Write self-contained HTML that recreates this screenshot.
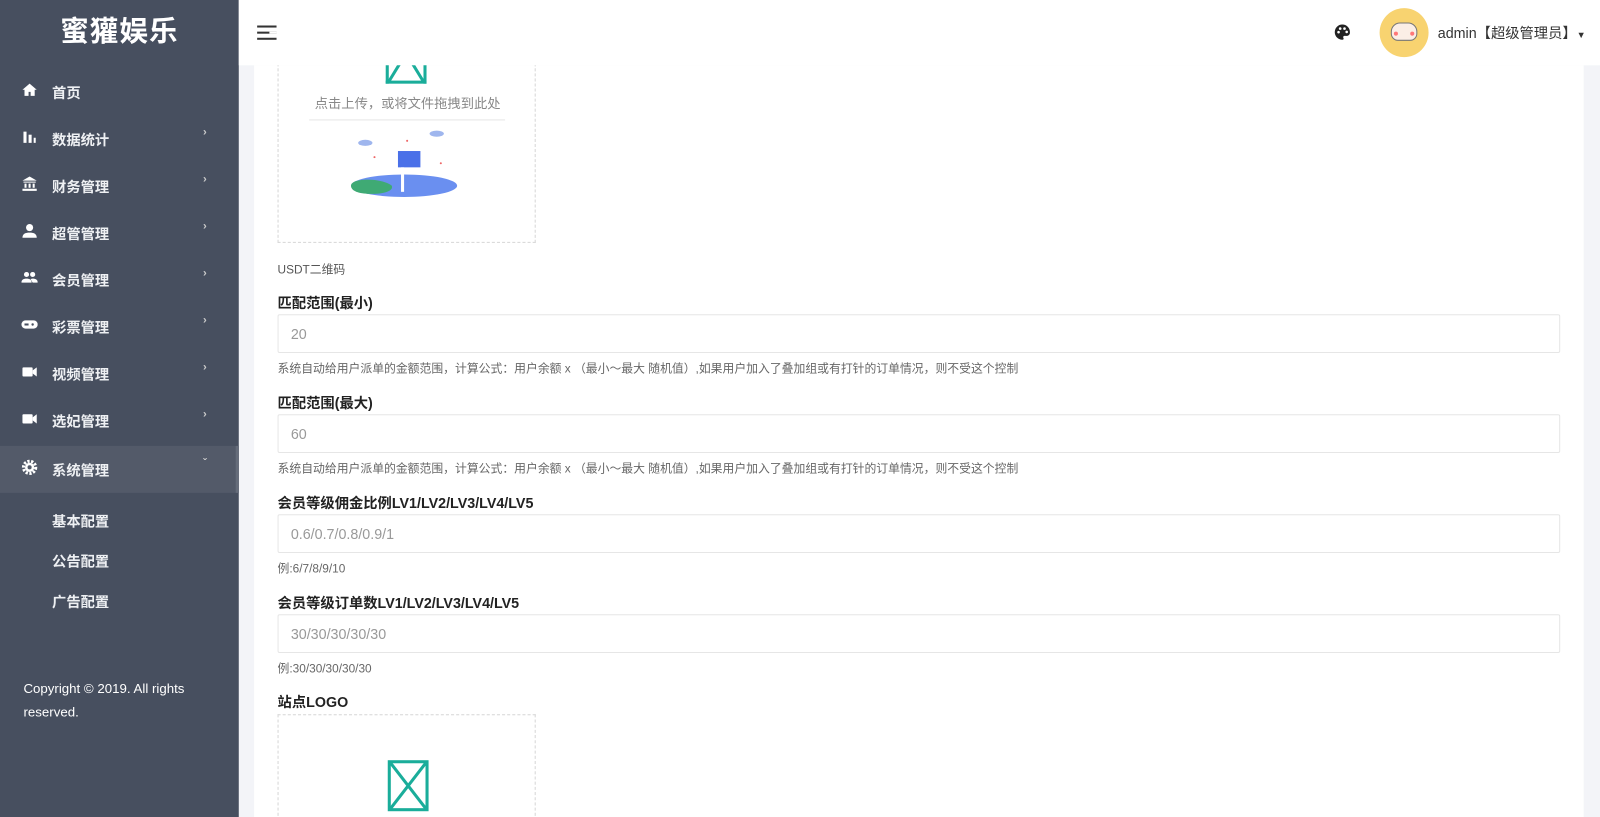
<!DOCTYPE html>
<html><head><meta charset="utf-8"><style>
*{margin:0;padding:0;box-sizing:border-box}
body{width:1600px;height:817px;overflow:hidden;background:#f3f4f8;font-family:"Liberation Sans","Noto Sans CJK SC",sans-serif}
#w{position:absolute;left:0;top:0;width:1568px;height:801px;transform:scale(1.020408);transform-origin:0 0}
.side{position:absolute;left:0;top:0;width:234px;height:801px;background:#474f5f;color:#fff}
.logo{height:64px;text-align:center;font-size:28px;font-weight:bold;line-height:62px;letter-spacing:1px}
.item{position:absolute;left:0;width:234px;height:46px;font-size:14px;font-weight:bold;color:#eef0f3}
.item .ic{position:absolute;left:21px;top:13px;width:16px;height:16px}
.item .t{position:absolute;left:51px;top:14px}
.item .ar{position:absolute;left:199px;top:11px;font-size:11px;color:#ccc}
.active{background:#535a69;border-right:3px solid #656c7a}
.sub{position:absolute;left:51px;font-size:14px;font-weight:bold;color:#eef0f3}
.copy{position:absolute;left:23px;top:663px;font-size:13px;line-height:23px;color:#fff}
.top{position:absolute;left:234px;top:0;width:1334px;height:64px;background:#fff}
.card{position:absolute;left:249px;top:64px;width:1303px;height:737px;background:#fff;overflow:hidden}
.lbl{position:absolute;left:23px;font-size:14px;font-weight:bold;color:#222}
.inp{position:absolute;left:23px;width:1257px;height:38px;border:1px solid #e6e6e6;border-radius:2px;font-size:14px;color:#999;padding:10px 12px;line-height:17px}
.hint{position:absolute;left:23px;font-size:11.6px;color:#666}
.up{position:absolute;left:23px;width:253px;border:1px dashed #d6d6d6}
</style></head><body><div id="w">
<div class="side">
<div class="logo">蜜獾娱乐</div>
<div class="item" style="top:67px"><svg class="ic" viewBox="0 0 16 16"><path d="M8 2L1 8h2v6h4v-4h2v4h4V8h2z" fill="#fff"/></svg><span class="t">首页</span></div>
<div class="item" style="top:113px"><svg class="ic" viewBox="0 0 16 16"><rect x="2" y="3" width="3" height="11" fill="#fff"/><rect x="7" y="6" width="3" height="8" fill="#fff"/><rect x="12" y="9" width="2" height="5" fill="#fff"/></svg><span class="t">数据统计</span><span class="ar">›</span></div>
<div class="item" style="top:159px"><svg class="ic" viewBox="0 0 16 16"><path d="M8 1L1 5h14zM2 6h12v1H2zM3 8h2v4H3zM7 8h2v4H7zM11 8h2v4h-2zM1 13h14v2H1z" fill="#fff"/></svg><span class="t">财务管理</span><span class="ar">›</span></div>
<div class="item" style="top:205px"><svg class="ic" viewBox="0 0 16 16"><circle cx="8" cy="5" r="3.5" fill="#fff"/><path d="M1 15c0-4 3-5 7-5s7 1 7 5z" fill="#fff"/></svg><span class="t">超管管理</span><span class="ar">›</span></div>
<div class="item" style="top:251px"><svg class="ic" viewBox="0 0 16 16"><circle cx="5" cy="5" r="2.5" fill="#fff"/><circle cx="11" cy="5" r="2.5" fill="#fff"/><path d="M0 13c0-3 2-4 5-4s5 1 5 4zM9 9.5c1-.4 1.5-.5 2-.5 3 0 5 1 5 4h-5z" fill="#fff"/></svg><span class="t">会员管理</span><span class="ar">›</span></div>
<div class="item" style="top:297px"><svg class="ic" viewBox="0 0 16 16"><rect x="0" y="4" width="16" height="8" rx="4" fill="#fff"/><circle cx="11" cy="8" r="1.2" fill="#474f5f"/><rect x="3" y="7" width="4" height="2" fill="#474f5f"/></svg><span class="t">彩票管理</span><span class="ar">›</span></div>
<div class="item" style="top:343px"><svg class="ic" viewBox="0 0 16 16"><rect x="1" y="4" width="10" height="9" rx="1" fill="#fff"/><path d="M11 7l4-3v9l-4-3z" fill="#fff"/></svg><span class="t">视频管理</span><span class="ar">›</span></div>
<div class="item" style="top:389px"><svg class="ic" viewBox="0 0 16 16"><rect x="1" y="4" width="10" height="9" rx="1" fill="#fff"/><path d="M11 7l4-3v9l-4-3z" fill="#fff"/></svg><span class="t">选妃管理</span><span class="ar">›</span></div>
<div class="item active" style="top:437px"><svg class="ic" viewBox="0 0 16 16"><circle cx="8" cy="8" r="6" fill="none" stroke="#fff" stroke-width="3" stroke-dasharray="2.2 1.5"/><circle cx="8" cy="8" r="4.5" fill="#fff"/><circle cx="8" cy="8" r="2" fill="#535a69"/></svg><span class="t">系统管理</span><span class="ar">ˇ</span></div>
<div class="sub" style="top:501px">基本配置</div>
<div class="sub" style="top:540px">公告配置</div>
<div class="sub" style="top:580px">广告配置</div>
<div class="copy">Copyright © 2019. All rights<br>reserved.</div>
</div>
<div class="top">
<div style="position:absolute;left:18px;top:25px;width:19px;height:2px;background:#333;box-shadow:0 6px 0 #333,0 12px 0 #333"></div>
<div style="position:absolute;left:30px;top:31px;width:7px;height:2px;background:#fff"></div>
<svg style="position:absolute;left:1073px;top:23px" width="17" height="17" viewBox="0 0 16 16"><path d="M8 1a7 7 0 0 0 0 14c1 0 1.5-.7 1-1.6-.5-.9 0-1.9 1-1.9h2A3 3 0 0 0 15 8 7 7 0 0 0 8 1z" fill="#222"/><circle cx="4.5" cy="8" r="1.2" fill="#fff"/><circle cx="6" cy="4.7" r="1.2" fill="#fff"/><circle cx="10" cy="4.7" r="1.2" fill="#fff"/><circle cx="12" cy="7.8" r="1.2" fill="#fff"/></svg>
<div style="position:absolute;left:1118px;top:8px;width:48px;height:48px;border-radius:50%;background:#f8d370"></div>
<div style="position:absolute;left:1129px;top:22px;width:26px;height:18px;border-radius:9px 9px 7px 7px;background:#fbeee6;border:1px solid #777"></div>
<div style="position:absolute;left:1132px;top:31px;width:4px;height:4px;border-radius:50%;background:#f77"></div>
<div style="position:absolute;left:1148px;top:31px;width:4px;height:4px;border-radius:50%;background:#f77"></div>
<div style="position:absolute;left:1175px;top:22px;font-size:14px;color:#333">admin【超级管理员】<span style="font-size:9px">▼</span></div>
</div>
<div class="card">
<div class="up" style="top:-2px;height:176px;border-top:none">
<div style="position:absolute;left:105px;top:0;width:40px;height:20px;border:3px solid #1aad9a;border-top:none"></div>
<svg style="position:absolute;left:105px;top:0" width="40" height="20"><path d="M3 18L14 0M37 18L26 0" stroke="#1aad9a" stroke-width="3"/></svg>
<div style="position:absolute;left:0;width:253px;top:29px;text-align:center;font-size:13px;color:#888">点击上传，或将文件拖拽到此处</div>
<div style="position:absolute;left:30px;top:55px;width:192px;height:1px;background:#e6e6e6"></div>
<svg style="position:absolute;left:65px;top:62px" width="115" height="75"><ellipse cx="58" cy="58" rx="52" ry="11" fill="#6a8ff0"/><path d="M6 58c0-8 30-8 40 0 2 6-10 8-20 8S6 64 6 58z" fill="#3faa74"/><rect x="52" y="24" width="22" height="16" fill="#4a70e8"/><rect x="55" y="40" width="3" height="24" fill="#fff"/><ellipse cx="20" cy="16" rx="7" ry="3" fill="#9fb6ee"/><ellipse cx="90" cy="7" rx="7" ry="3" fill="#9fb6ee"/><circle cx="61" cy="14" r="1" fill="#e66"/><circle cx="29" cy="30" r="1" fill="#e66"/><circle cx="94" cy="36" r="1" fill="#e66"/></svg>
</div>
<div class="hint" style="top:192px;color:#555">USDT二维码</div>
<div class="lbl" style="top:223px">匹配范围(最小)</div>
<div class="inp" style="top:244px">20</div>
<div class="hint" style="top:289px">系统自动给用户派单的金额范围，计算公式：用户余额 x （最小～最大 随机值）,如果用户加入了叠加组或有打针的订单情况，则不受这个控制</div>
<div class="lbl" style="top:321px">匹配范围(最大)</div>
<div class="inp" style="top:342px">60</div>
<div class="hint" style="top:387px">系统自动给用户派单的金额范围，计算公式：用户余额 x （最小～最大 随机值）,如果用户加入了叠加组或有打针的订单情况，则不受这个控制</div>
<div class="lbl" style="top:419px">会员等级佣金比例LV1/LV2/LV3/LV4/LV5</div>
<div class="inp" style="top:440px">0.6/0.7/0.8/0.9/1</div>
<div class="hint" style="top:485px">例:6/7/8/9/10</div>
<div class="lbl" style="top:517px">会员等级订单数LV1/LV2/LV3/LV4/LV5</div>
<div class="inp" style="top:538px">30/30/30/30/30</div>
<div class="hint" style="top:583px">例:30/30/30/30/30</div>
<div class="lbl" style="top:614px">站点LOGO</div>
<div class="up" style="top:636px;height:130px">
<div style="position:absolute;left:107px;top:44px;width:40px;height:50px;border:3px solid #1aad9a"></div>
<svg style="position:absolute;left:107px;top:44px" width="40" height="50"><path d="M3 3L37 47M37 3L3 47" stroke="#1aad9a" stroke-width="3"/></svg>
</div>
</div>
</div></body></html>
